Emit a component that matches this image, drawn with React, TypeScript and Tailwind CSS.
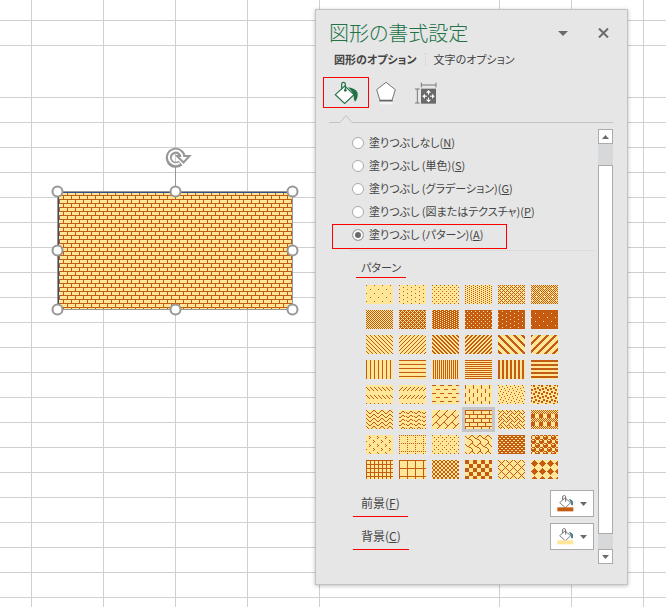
import React, { useId, useState } from 'react';
import clsx from 'clsx';

const FOREGROUND = '#c55a11';
const BACKGROUND = '#ffe699';

interface FillPattern {
  name: string;
  rows: number[];
}

// 8x8 bitmaps, one byte per row; shorter lists repeat
const fillPatterns: FillPattern[] = [
  { name: '5%', rows: [0x80, 0, 0, 0, 0x08, 0, 0, 0] },
  { name: '10%', rows: [0x80, 0, 0x08, 0] },
  { name: '20%', rows: [0x88, 0, 0x22, 0] },
  { name: '25%', rows: [0x88, 0x22] },
  { name: '30%', rows: [0xaa, 0x44, 0xaa, 0x11] },
  { name: '40%', rows: [0xaa, 0x55, 0xaa, 0x51, 0xaa, 0x55, 0xaa, 0x15] },
  { name: '50%', rows: [0xaa, 0x55] },
  { name: '60%', rows: [0xee, 0x55, 0xbb, 0x55] },
  { name: '70%', rows: [0x77, 0xdd] },
  { name: '75%', rows: [0xff, 0xdd, 0xff, 0x77] },
  { name: '80%', rows: [0xff, 0xf7, 0xff, 0x7f] },
  { name: '90%', rows: [0xff, 0xff, 0xff, 0xf7, 0xff, 0xff, 0xff, 0x7f] },
  { name: '右下がり対角線 (反転)', rows: [0x88, 0x44, 0x22, 0x11] },
  { name: '右上がり対角線 (反転)', rows: [0x11, 0x22, 0x44, 0x88] },
  { name: '右下がり対角線', rows: [0xcc, 0x66, 0x33, 0x99] },
  { name: '右上がり対角線', rows: [0x33, 0x66, 0xcc, 0x99] },
  { name: '右下がり対角線 (太)', rows: [0xc1, 0xe0, 0x70, 0x38, 0x1c, 0x0e, 0x07, 0x83] },
  { name: '右上がり対角線 (太)', rows: [0xc1, 0x83, 0x07, 0x0e, 0x1c, 0x38, 0x70, 0xe0] },
  { name: '縦線', rows: [0x88] },
  { name: '横線', rows: [0xff, 0, 0, 0] },
  { name: '縦線 (反転)', rows: [0x55] },
  { name: '横線 (反転)', rows: [0xff, 0] },
  { name: '縦線 (太)', rows: [0xcc] },
  { name: '横線 (太)', rows: [0xff, 0xff, 0, 0] },
  { name: '破線 (右下がり)', rows: [0, 0, 0x88, 0x44, 0x22, 0x11, 0, 0] },
  { name: '破線 (右上がり)', rows: [0, 0, 0x11, 0x22, 0x44, 0x88, 0, 0] },
  { name: '横の破線', rows: [0xf0, 0, 0, 0, 0x0f, 0, 0, 0] },
  { name: '縦の破線', rows: [0x80, 0x80, 0x80, 0x80, 0x08, 0x08, 0x08, 0x08] },
  { name: '紙ふぶき (小)', rows: [0x80, 0x08, 0x40, 0x02, 0x10, 0x01, 0x20, 0x04] },
  { name: '紙ふぶき (大)', rows: [0xb1, 0x30, 0x03, 0x1b, 0xd8, 0xc0, 0x0c, 0x8d] },
  { name: 'ジグザグ', rows: [0x81, 0x42, 0x24, 0x18] },
  { name: '波線', rows: [0, 0x18, 0x25, 0xc0] },
  { name: 'れんが (斜め)', rows: [0x01, 0x02, 0x04, 0x08, 0x18, 0x24, 0x42, 0x81] },
  { name: 'れんが (横)', rows: [0xff, 0x80, 0x80, 0x80, 0xff, 0x08, 0x08, 0x08] },
  { name: '編み込み', rows: [0x88, 0x54, 0x22, 0x45, 0x88, 0x14, 0x22, 0x51] },
  { name: '格子', rows: [0xaa, 0x55, 0xaa, 0x55, 0xf0, 0xf0, 0xf0, 0xf0] },
  { name: '切り込み', rows: [0, 0x10, 0x08, 0x10, 0, 0x01, 0x80, 0x01] },
  { name: '点線 (格子)', rows: [0xaa, 0, 0x80, 0, 0x80, 0, 0x80, 0] },
  { name: '点線 (ひし形)', rows: [0x80, 0, 0x22, 0, 0x08, 0, 0x22, 0] },
  { name: 'うろこ', rows: [0x03, 0x84, 0x48, 0x30, 0x0c, 0x02, 0x01, 0x01] },
  { name: 'ざらざら', rows: [0xff, 0x66, 0xff, 0x99] },
  { name: '球', rows: [0x77, 0x89, 0x8f, 0x8f, 0x77, 0x98, 0xf8, 0xf8] },
  { name: '格子 (小)', rows: [0xff, 0x88, 0x88, 0x88] },
  { name: '格子 (大)', rows: [0xff, 0x80, 0x80, 0x80, 0x80, 0x80, 0x80, 0x80] },
  { name: '市松模様 (小)', rows: [0x99, 0x66, 0x66, 0x99] },
  { name: '市松模様 (大)', rows: [0xf0, 0xf0, 0xf0, 0xf0, 0x0f, 0x0f, 0x0f, 0x0f] },
  { name: 'ひし形 (枠)', rows: [0x82, 0x44, 0x28, 0x10, 0x28, 0x44, 0x82, 0x01] },
  { name: 'ひし形 (強調)', rows: [0x10, 0x38, 0x7c, 0xfe, 0x7c, 0x38, 0x10, 0] },
];

const fillTypes = [
  { id: 'none', label: '塗りつぶしなし', accessKey: 'N' },
  { id: 'solid', label: '塗りつぶし (単色)', accessKey: 'S' },
  { id: 'gradient', label: '塗りつぶし (グラデーション)', accessKey: 'G' },
  { id: 'picture', label: '塗りつぶし (図またはテクスチャ)', accessKey: 'P' },
  { id: 'pattern', label: '塗りつぶし (パターン)', accessKey: 'A' },
];

const columns = ['w-[31px]', 'w-[72px]', 'w-[72px]', 'w-[72px]', 'w-[72px]', 'w-[180px]', 'w-[72px]', 'w-[72px]', 'w-[72px]'];
const rowHeights = ['h-[20px]', 'h-[25px]', 'h-[52px]', ...Array(21).fill('h-[25px]')];

function bitmapPath(rows: number[]) {
  let d = '';
  for (let y = 0; y < 8; y++) {
    for (let x = 0; x < 8; x++) {
      if (rows[y % rows.length] & (0x80 >> x)) d += `M${x} ${y}h1v1h-1z`;
    }
  }
  return d;
}

function PatternDef({ id, rows, x = 0, y = 0 }: { id: string; rows: number[]; x?: number; y?: number }) {
  return (
    <pattern id={id} x={x} y={y} width="8" height="8" patternUnits="userSpaceOnUse">
      <rect width="8" height="8" fill={BACKGROUND} />
      <path d={bitmapPath(rows)} fill={FOREGROUND} shapeRendering="crispEdges" />
    </pattern>
  );
}

function Swatch({ rows }: { rows: number[] }) {
  const id = useId();
  return (
    <svg width="27" height="19" className="block" aria-hidden="true">
      <defs>
        <PatternDef id={id} rows={rows} />
      </defs>
      <rect width="27" height="19" fill={`url(#${id})`} />
    </svg>
  );
}

function Sheet() {
  return (
    <table className="w-[715px] table-fixed border-collapse" aria-label="シート">
      <colgroup>
        {columns.map((width, i) => (
          <col key={i} className={width} />
        ))}
      </colgroup>
      <tbody>
        {rowHeights.map((height, r) => (
          <tr key={r} className={height}>
            {columns.map((_, c) => (
              <td key={c} className="border-r border-b border-[#d0d0d0] p-0" />
            ))}
          </tr>
        ))}
      </tbody>
    </table>
  );
}

function SelectedShape({ rows }: { rows: number[] }) {
  const handles = [
    [8, 48], [126, 48], [243, 48],
    [8, 107], [243, 107],
    [8, 166], [126, 166], [243, 166],
  ];
  return (
    <svg
      width="252"
      height="176"
      viewBox="0 0 252 176"
      className="absolute top-[143px] left-[50px]"
      role="img"
      aria-label="四角形"
    >
      <defs>
        <PatternDef id="shape-fill" rows={rows} x={5} y={4} />
      </defs>
      <rect x="8" y="48" width="235" height="118" fill="url(#shape-fill)" />
      <path d="M7.5 166.5V48.5H242.5V166.5Z" fill="none" stroke="#979797" />
      <path d="M8.5 166V49.5H242" fill="none" stroke="#2f528f" />
      <path d="M125.5 24V48" stroke="#979797" />
      {/* Rotation handle: hollow arc with an arrow head */}
      <path d="M130.5 20A7 7 0 1 1 132.5 13" fill="none" stroke="#979797" strokeWidth="6" />
      <path d="M127 13H139.500L133.500 19.500Z" fill="#fff" stroke="#979797" strokeWidth="2" />
      <path d="M129.500 20A6.800 6.800 0 1 1 132.500 14.500" fill="none" stroke="#fff" strokeWidth="2" />
      {handles.map(([x, y]) => (
        <circle key={`${x}-${y}`} cx={x - 0.5} cy={y + 0.5} r="5" fill="#fff" stroke="#979797" strokeWidth="2" />
      ))}
    </svg>
  );
}

function FillIcon() {
  return (
    <svg width="25" height="24" viewBox="0 0 75 72" aria-hidden="true">
      <path d="M42 19Q66 22 71 36Q72 54 63 62Q58 54 59 44Q56 32 42 19Z" fill="#217346" />
      <path d="M32 15L60 41L32 67L4 41Z" fill="#fff" stroke="#217346" strokeWidth="3.5" />
      <path d="M23 24V9Q23 4 28 4Q34 4 34 9V28" fill="none" stroke="#217346" strokeWidth="3.5" />
      <circle cx="34" cy="28" r="4" fill="#217346" />
    </svg>
  );
}

function EffectsIcon() {
  return (
    <svg width="22" height="24" viewBox="0 0 66 72" aria-hidden="true">
      <path d="M14 60H52V70H14Z" fill="#f5f5f5" />
      <path d="M33 4L61 26L51 58H15L5 26Z" fill="#fff" stroke="#777" strokeWidth="3" />
      <path d="M13 59H53" stroke="#666" strokeWidth="5" />
    </svg>
  );
}

function SizeIcon() {
  return (
    <svg width="22" height="22" viewBox="0 0 66 66" aria-hidden="true">
      <path d="M19 9H63M19 2V16M63 2V16M7 21V63M0 21H14M0 63H14" fill="none" stroke="#777" strokeWidth="3" />
      <path d="M18 20H63V65H18Z" fill="#6a6a6a" />
      <path d="M40.500 24L48 32H33ZM40.500 61L48 53H33ZM22 42.500L30 35V50ZM59 42.500L51 35V50Z" fill="#fff" />
      <path d="M40.500 30V38M40.500 47V55M28 42.500H36M45 42.500H53" stroke="#fff" strokeWidth="3" />
    </svg>
  );
}

function Caret({ up = false }: { up?: boolean }) {
  return (
    <svg width="7" height="4" viewBox="0 0 7 4" aria-hidden="true">
      <path d={up ? 'M0 4H7L3.500 0Z' : 'M0 0H7L3.500 4Z'} fill="#6a6a6a" />
    </svg>
  );
}

function ColorButton({ id, color }: { id: string; color: string }) {
  return (
    <button
      id={id}
      type="button"
      className="flex h-[27px] w-11 items-center justify-center gap-[6px] border border-[#ababab] bg-white"
    >
      <svg width="17" height="17" viewBox="0 0 51 51" aria-hidden="true">
        <path d="M36 12Q46 13 48 21V31H43Q43 22 36 12Z" fill="#4a7f8c" />
        <path d="M24 9L41 23L25 38L8 23Z" fill="#fff" stroke="#6a6a6a" strokeWidth="2.5" />
        <path d="M17 15V4Q22 -1 26 4V20" fill="none" stroke="#6a6a6a" strokeWidth="3" />
        <path d="M1 37H49V49H1Z" fill={color} />
      </svg>
      <Caret />
    </button>
  );
}

function ScrollBar() {
  return (
    <div className="flex w-[15px] shrink-0 flex-col bg-[#d6d8d9]">
      <button type="button" aria-label="上へ" className="flex h-[15px] items-center justify-center border border-[#ababab] bg-white">
        <Caret up />
      </button>
      <div className="mt-[21px] mb-[15px] flex-1 border border-[#ababab] bg-white" />
      <button type="button" aria-label="下へ" className="flex h-[15px] items-center justify-center border border-[#ababab] bg-white">
        <Caret />
      </button>
    </div>
  );
}

export default function App() {
  const [fillType, setFillType] = useState('pattern');
  const [selected, setSelected] = useState(33);

  return (
    <main className="relative h-screen overflow-hidden bg-white font-['Noto_Sans_CJK_JP',sans-serif] text-[11px] text-[#444] [font-feature-settings:'palt']">
      <Sheet />
      <SelectedShape rows={fillPatterns[selected].rows} />

      <section className="absolute top-[9px] right-[38px] w-[313px] border border-[#c3c3c3] bg-[#e6e6e6] pb-5 shadow-[0_1px_4px_rgba(0,0,0,0.25)]">
        {/* Title bar */}
        <header className="flex h-[38px] items-center pt-2 pr-[18px] pl-[13px]">
          <h1 className="flex-1 text-xl leading-7 font-light text-[#217346]">図形の書式設定</h1>
          <button type="button" aria-label="オプション" className="mr-[30px]">
            <svg width="10" height="5" viewBox="0 0 10 5" aria-hidden="true">
              <path d="M0 0H10L5 5Z" fill="#6a6a6a" />
            </svg>
          </button>
          <button type="button" aria-label="閉じる">
            <svg width="11" height="10" viewBox="0 0 11 10" aria-hidden="true">
              <path d="M1 0.500L10 9.500M10 0.500L1 9.500" stroke="#6a6a6a" strokeWidth="2" />
            </svg>
          </button>
        </header>

        {/* Option groups */}
        <nav className="flex h-[22px] items-center pl-[18px]">
          <button type="button" className="font-bold">図形のオプション</button>
          <span className="mx-2 h-3 border-l border-dotted border-[#d0d0d0]" />
          <button type="button">文字のオプション</button>
        </nav>

        {/* Category icons */}
        <div className="mt-[7px] flex h-[31px] items-center pl-[7px]">
          <button type="button" aria-label="塗りつぶしと線" className="flex h-[31px] w-[46px] items-center justify-center border border-[#f00]">
            <FillIcon />
          </button>
          <button type="button" aria-label="効果" className="ml-[6px]">
            <EffectsIcon />
          </button>
          <button type="button" aria-label="サイズとプロパティ" className="ml-[18px]">
            <SizeIcon />
          </button>
        </div>
        <div className="relative mr-[14px] ml-[13px] h-[15px] border-b border-[#c3c3c3]">
          <svg width="14" height="9" viewBox="0 0 14 9" className="absolute -bottom-px left-[10px]" aria-hidden="true">
            <path d="M1 8.500L7 1.500L13 8.500V9H1Z" fill="#e6e6e6" />
            <path d="M0 8.500H1L7 1.500L13 8.500H14" fill="none" stroke="#c3c3c3" />
          </svg>
        </div>

        <div className="mt-[6px] mr-[14px] ml-[35px] flex gap-1">
          <div className="min-w-0 flex-1 pt-[2px] pb-[14px]">
            <fieldset className="border-b border-dotted border-[#d0d0d0] pb-1">
              {fillTypes.map((type) => (
                <label key={type.id} className="relative flex h-[23px] items-center gap-[5px] pl-px">
                  <input
                    type="radio"
                    name="fill-type"
                    checked={fillType === type.id}
                    onChange={() => setFillType(type.id)}
                    className="size-3 appearance-none rounded-full border border-[#ababab] bg-white checked:bg-[#6a6a6a] checked:shadow-[inset_0_0_0_2px_#fff]"
                  />
                  <span>
                    {type.label}(<u>{type.accessKey}</u>)
                  </span>
                  {type.id === 'pattern' && (
                    <span className="pointer-events-none absolute top-[1px] left-[-19px] h-[25px] w-[175px] border border-[#f00]" />
                  )}
                </label>
              ))}
            </fieldset>

            <h2 className="mt-[6px] ml-[5px] inline-block border-b border-[#f00] px-[5px] leading-5">パターン</h2>
            <div className="mt-1 ml-3 grid w-fit grid-cols-6">
              {fillPatterns.map((pattern, i) => (
                <button
                  key={pattern.name}
                  type="button"
                  aria-label={pattern.name}
                  aria-pressed={selected === i}
                  onClick={() => setSelected(i)}
                  className={clsx('p-[3px]', selected === i && 'bg-[#c6c6c6]')}
                >
                  <Swatch rows={pattern.rows} />
                </button>
              ))}
            </div>

            <div className="mt-2 flex items-center justify-between pl-[2px]">
              <label htmlFor="foreground" className="border-b border-[#f00] px-2 text-xs leading-[26px]">
                前景(<u>F</u>)
              </label>
              <ColorButton id="foreground" color={FOREGROUND} />
            </div>
            <div className="mt-[6px] flex items-center justify-between pl-[2px]">
              <label htmlFor="background" className="border-b border-[#f00] px-2 text-xs leading-[26px]">
                背景(<u>C</u>)
              </label>
              <ColorButton id="background" color={BACKGROUND} />
            </div>
          </div>
          <ScrollBar />
        </div>
      </section>
    </main>
  );
}
